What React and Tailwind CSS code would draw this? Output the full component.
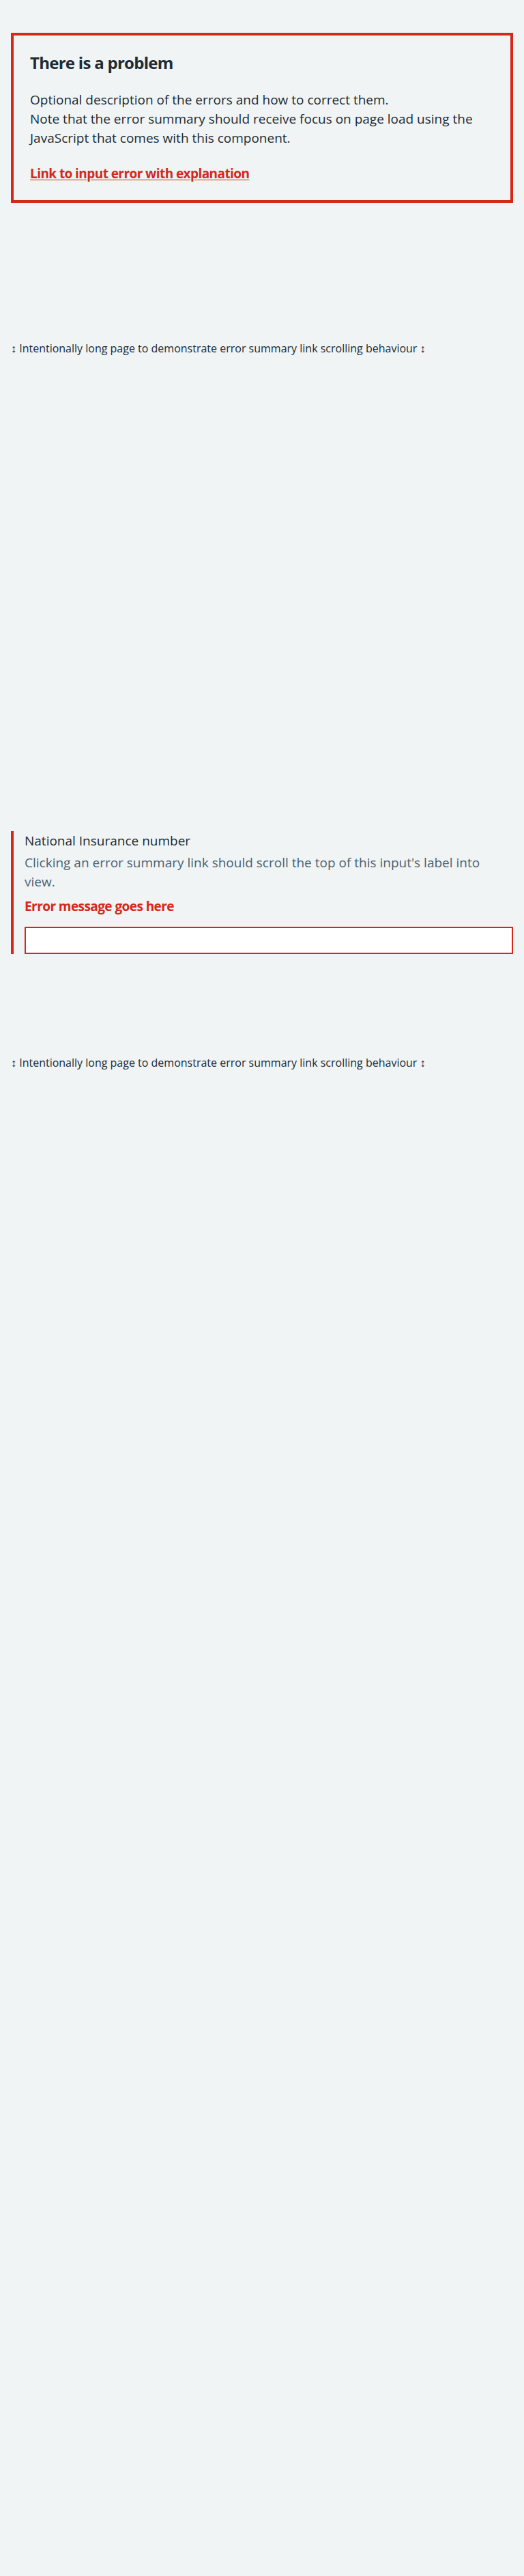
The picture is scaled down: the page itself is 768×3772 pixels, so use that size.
import React from 'react'

const font = { fontFamily: '"Open Sans", "Noto Sans", "Liberation Sans", sans-serif' }

function ErrorSummary() {
    return (
        <div className="border-4 border-[#d5281b] p-6" role="alert" tabIndex={-1}>
            <h2 className="mb-6 text-[24px] font-bold leading-8 tracking-[-0.03em] text-[#212b32]">
                There is a problem
            </h2>
            <div className="mb-6 text-[19px] leading-7 text-[#212b32]">
                <p>Optional description of the errors and how to correct them.</p>
                <p>
                    Note that the error summary should receive focus on page load using the
                    <br />
                    JavaScript that comes with this component.
                </p>
            </div>
            <ul className="leading-7">
                <li>
                    <a href="#ni-number" className="text-[19px] font-bold leading-7 tracking-[-0.03em] text-[#d5281b] underline underline-offset-2">
                        Link to input error with explanation
                    </a>
                </li>
            </ul>
        </div>
    )
}

function LongPageNote({ className }) {
    return (
        <p className={`text-[16px] leading-6 text-[#212b32] ${className}`}>
            ↕ Intentionally long page to demonstrate error summary link scrolling behaviour ↕
        </p>
    )
}

export default function App() {
    return (
        <div className="min-h-screen bg-[#f0f4f5]" style={font}>
            <main className="px-4 pt-12">
                <ErrorSummary />

                <LongPageNote className="mt-[201px]" />

                <div className="mt-[695px] border-l-4 border-[#d5281b] pl-4">
                    <label htmlFor="ni-number" className="mb-1 block text-[19px] leading-7 text-[#212b32]">
                        National Insurance number
                    </label>
                    <div className="mb-2 text-[19px] leading-7 text-[#4c6272]">
                        Clicking an error summary link should scroll the top of this input's label
                        into
                        <br />
                        view.
                    </div>
                    <p className="mb-4 text-[19px] font-bold leading-7 tracking-[-0.03em] text-[#d5281b]">
                        Error message goes here
                    </p>
                    <input
                        id="ni-number"
                        type="text"
                        className="block h-10 w-full border-2 border-[#d5281b] bg-white px-2 text-[19px] outline-none"
                    />
                </div>

                <LongPageNote className="mt-[147px]" />
            </main>
        </div>
    )
}
